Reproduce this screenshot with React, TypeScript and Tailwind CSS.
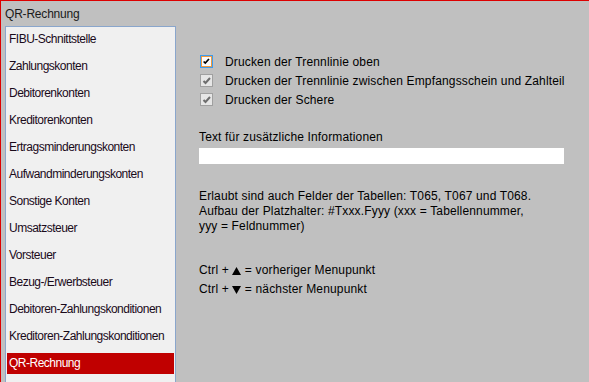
const menuItems = [
  'FIBU-Schnittstelle',
  'Zahlungskonten',
  'Debitorenkonten',
  'Kreditorenkonten',
  'Ertragsminderungskonten',
  'Aufwandminderungskonten',
  'Sonstige Konten',
  'Umsatzsteuer',
  'Vorsteuer',
  'Bezug-/Erwerbsteuer',
  'Debitoren-Zahlungskonditionen',
  'Kreditoren-Zahlungskonditionen',
  'QR-Rechnung',
];

const options = [
  { label: 'Drucken der Trennlinie oben', focused: true },
  { label: 'Drucken der Trennlinie zwischen Empfangsschein und Zahlteil', focused: false },
  { label: 'Drucken der Schere', focused: false },
];

const Check = ({ focused }: { focused: boolean }) => (
  <div
    className={`w-[13px] h-[13px] flex-none border ${
      focused ? 'border-[#3c9cf0] bg-[#f29a3c] p-[1px]' : 'border-[#a0a0a0] bg-[#e6e6e6]'
    }`}
  >
    <div className={`w-full h-full ${focused ? 'bg-[#fbfbfb]' : ''}`}>
      <svg viewBox="0 0 11 11" className="w-full h-full">
        <polyline
          points={focused ? '2,5.5 4,7.5 8.5,2.5' : '2.5,6 4.5,8 9,3'}
          fill="none"
          stroke={focused ? '#000' : '#6e6e6e'}
          strokeWidth="2"
        />
      </svg>
    </div>
  </div>
);

const Arrow = ({ up }: { up: boolean }) => (
  <svg width="9" height="8" viewBox="0 0 9 8" className="inline-block align-[-1px]">
    <polygon points={up ? '4.5,0 9,8 0,8' : '0,0 9,0 4.5,8'} fill="#000" />
  </svg>
);

export default function App() {
  return (
    <div
      className="w-[589px] h-[382px] overflow-hidden bg-[#c0c0c0] border-t border-l border-[#dd0000] flex flex-col text-[12px] text-black"
      style={{ fontFamily: '"Liberation Sans", Arial, sans-serif' }}
    >
      {/* Title */}
      <div className="pl-[4px] pt-[6px] h-[20px] leading-[14px] text-[#1a1a1a] tracking-[-0.2px]">QR-Rechnung</div>

      <div className="flex flex-1 mt-[5px] pl-[4px] min-h-0">
        {/* Menu list */}
        <div className="w-[171px] flex-none bg-[#f0f0f0] border border-[#8aa6cc] border-b-0 overflow-hidden pt-[1px] tracking-[-0.5px]">
          {menuItems.map((item, i) => {
            const selected = i === menuItems.length - 1;
            return (
              <div key={item} className="h-[27px] pt-[1px]">
                <div
                  className={`h-[21px] leading-[21px] mx-[1px] px-[2px] whitespace-nowrap ${
                    selected ? 'bg-[#c00000] text-white' : 'text-[#1a0a1a]'
                  }`}
                >
                  {item}
                </div>
              </div>
            );
          })}
        </div>

        {/* Settings */}
        <div className="flex-1 pl-[23px] pt-[26px] tracking-[0.15px]">
          {options.map((o) => (
            <div key={o.label} className="h-[19px] flex items-center gap-[12px] pl-[1px] whitespace-nowrap">
              <Check focused={o.focused} />
              <span>{o.label}</span>
            </div>
          ))}

          <div className="mt-[21px] leading-[14px]">Text für zusätzliche Informationen</div>
          <div className="mt-[4px] w-[365px] h-[16px] bg-white"></div>

          <div className="mt-[25px] leading-[15px]">
            <div>Erlaubt sind auch Felder der Tabellen: T065, T067 und T068.</div>
            <div>Aufbau der Platzhalter: #Txxx.Fyyy (xxx = Tabellennummer,</div>
            <div>yyy = Feldnummer)</div>
          </div>

          <div className="mt-[27px] leading-[19px]">
            <div>
              Ctrl + <Arrow up /> = vorheriger Menupunkt
            </div>
            <div>
              Ctrl + <Arrow up={false} /> = nächster Menupunkt
            </div>
          </div>
        </div>
      </div>
    </div>
  );
}
